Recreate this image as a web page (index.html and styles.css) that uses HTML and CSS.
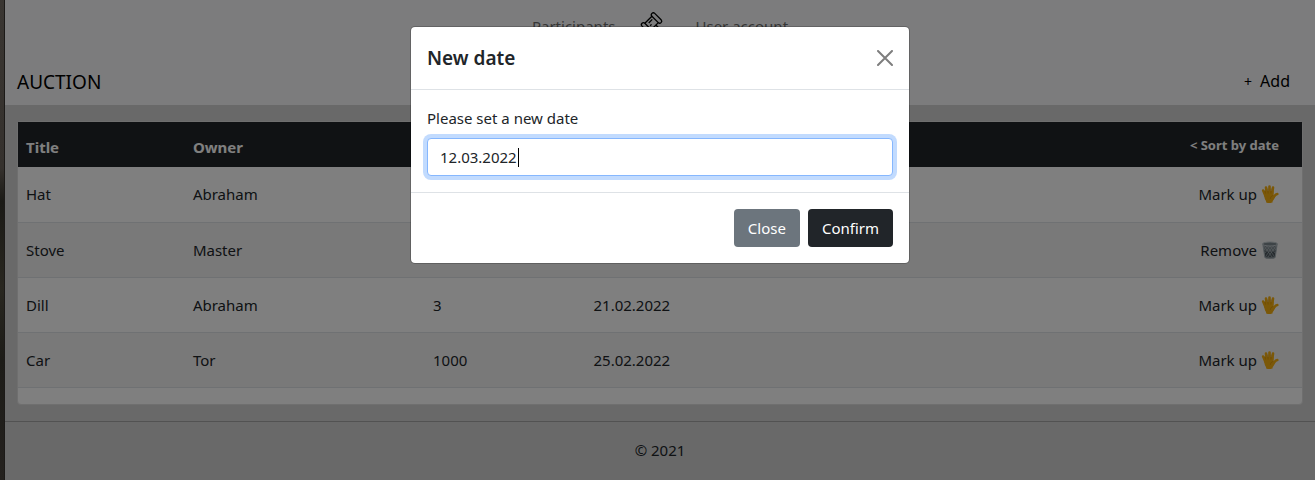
FILE: index.html
```html
<!DOCTYPE html>
<html lang="en">
<head>
<meta charset="utf-8">
<title>Auction</title>
<link rel="stylesheet" href="styles.css">
</head>
<body>
<svg class="sprite" aria-hidden="true">
  <symbol id="hand" viewBox="0 0 18 18">
    <g fill="none" stroke="#f7b010" stroke-width="2.600" stroke-linecap="round">
      <path d="M2.200 5.500 4.500 11M5 2.500 6 10M8.500 1.600V10M12 2.600 11 10"/>
      <path d="M16.300 9c-2.300.2-2.800 2.500-4.300 4"/>
    </g>
    <path fill="#f7b010" d="M3.200 9.500 4 6h8.500v4.500l1.500.5c-.3 2.500-1.500 4-2.300 5l-.2 1.500c-2 .7-4.500.6-6.300-.1l-.2-1.400C3.800 14.500 3.300 12 3.200 9.500z"/>
    <path fill="none" stroke="#d28b00" stroke-width=".6" d="m3.900 5.500.6 3M6.800 3.500l.3 5M10.200 3.500l-.3 5M12.300 10.500c-1.800.2-2.800 1.500-2.900 3.300"/>
  </symbol>
  <symbol id="bin" viewBox="0 0 18 18">
    <path fill="#7b858b" d="m1.800 3 2 13.500c1 1.600 9.400 1.600 10.400 0L16.200 3z"/>
    <path fill="#4e5960" d="m3.300 9.500.9 5.500c2 1.200 7.600 1.200 9.600 0l.9-5.500c-3 1.400-8.400 1.400-11.400 0z"/>
    <path fill="none" stroke="#b9c3c8" stroke-width=".6" d="m3 5 8 11M6 5l7 10M9 5l5 7M12 5l3 4M15 5 7 16M12 5l-7 10M9 5l-5 7M6 5 3 9"/>
    <path fill="none" stroke="#a9b4ba" stroke-width="1" d="m1.800 3 2 13.400c1.200 1.300 9.200 1.300 10.400 0L16.200 3"/>
    <ellipse cx="9" cy="3" rx="7.600" ry="2" fill="#7d888e" stroke="#c3ccd0" stroke-width="1"/>
  </symbol>
</svg>
<div class="desktop">
  <div class="wallpaper"></div>
  <div class="page">
    <header class="header">
      <nav class="nav">
        <a href="#participants">Participants</a>
        <svg class="gavel" viewBox="0 0 24 24" aria-hidden="true">
          <g fill="none" stroke="#000" stroke-width="1.300" transform="translate(12.500 4) rotate(45)">
            <rect x="-6.500" y="-2" width="13" height="4" rx="2"/>
            <path d="M-4.500 2v10M4.500 2v10M-2 4v5M1 8v2"/>
            <rect x="-6.500" y="12" width="13" height="4" rx="2"/>
            <path d="M4.500 5.500h14v3h-14"/>
          </g>
        </svg>
        <a href="#account">User account</a>
      </nav>
      <div class="title-row">
        <h1 class="title">AUCTION</h1>
        <button class="add" type="button"><span class="plus">+</span>Add</button>
      </div>
    </header>
    <main class="content">
      <div class="card">
        <table class="lots">
          <colgroup><col class="col-title"><col class="col-owner"><col class="col-price"><col><col></colgroup>
          <thead>
            <tr><th>Title</th><th>Owner</th><th>Price</th><th>Date</th><th class="action"><button class="sort" type="button">&lt; Sort by date</button></th></tr>
          </thead>
          <tbody>
            <tr><td>Hat</td><td>Abraham</td><td></td><td></td><td class="action"><button class="link" type="button">Mark up<svg class="emoji"><use href="#hand"/></svg></button></td></tr>
            <tr><td>Stove</td><td>Master</td><td></td><td></td><td class="action"><button class="link" type="button">Remove<svg class="emoji"><use href="#bin"/></svg></button></td></tr>
            <tr><td>Dill</td><td>Abraham</td><td>3</td><td>21.02.2022</td><td class="action"><button class="link" type="button">Mark up<svg class="emoji"><use href="#hand"/></svg></button></td></tr>
            <tr><td>Car</td><td>Tor</td><td>1000</td><td>25.02.2022</td><td class="action"><button class="link" type="button">Mark up<svg class="emoji"><use href="#hand"/></svg></button></td></tr>
          </tbody>
        </table>
      </div>
    </main>
    <footer class="footer">© 2021</footer>
    <div class="backdrop">
      <form class="modal" role="dialog" aria-labelledby="modal-title">
        <div class="modal-header">
          <h2 class="modal-title" id="modal-title">New date</h2>
          <button class="close" type="button" aria-label="Close">
            <svg viewBox="0 0 16 16" width="16" height="16"><path d="m1 1 14 14M15 1 1 15" fill="none" stroke="#000" stroke-width="2" stroke-linecap="round"/></svg>
          </button>
        </div>
        <div class="modal-body">
          <label class="label" for="date">Please set a new date</label>
          <div class="field">
            <input class="input" id="date" type="text" value="12.03.2022">
            <span class="caret"></span>
          </div>
        </div>
        <div class="modal-footer">
          <button class="btn btn-secondary" type="button">Close</button>
          <button class="btn btn-dark" type="button">Confirm</button>
        </div>
      </form>
    </div>
  </div>
</div>
</body>
</html>
```

FILE: styles.css
```css
* { box-sizing: border-box; }

body {
  margin: 0;
  font: 15px/24px "Noto Sans", sans-serif;
  color: #212529;
}

h1, h2 { margin: 0; }

button {
  margin: 0;
  padding: 0;
  border: 0;
  background: none;
  color: inherit;
  font: inherit;
  cursor: pointer;
}

.sprite {
  position: absolute;
  width: 0;
  height: 0;
}

.desktop {
  display: grid;
  grid-template-columns: 5px 1fr;
  min-height: 100vh;
}

.wallpaper {
  background: linear-gradient(#3a3632, #35312d 35%, #1b1a16 42%, #292720 60%, #1d1c18 75%, #25221f);
  border-right: 1px solid #1c1a18;
}

.page {
  position: relative;
  display: flex;
  flex-direction: column;
  background: #d3d3d3;
}

.header { background: #f8f9fa; }

.nav {
  display: flex;
  justify-content: center;
  align-items: center;
  gap: 28px;
  padding: 8px 0;
  height: 52px;
}

.nav a {
  color: #6c6c6c;
  text-decoration: none;
}

.gavel {
  width: 24px;
  height: 24px;
  overflow: visible;
}

.title-row {
  display: flex;
  justify-content: space-between;
  align-items: center;
  padding: 12px 25px 6px 12px;
  height: 53px;
  color: #000;
}

.title {
  font-size: 19px;
  font-weight: 400;
}

.add { font-size: 16px; }

.plus {
  margin-right: 8px;
  font-size: 14px;
}

.content { padding: 16px 12px; }

.card {
  padding-bottom: 16px;
  background: #fff;
  border: 1px solid #dedede;
  border-radius: 4px;
}

.lots {
  width: 100%;
  border-collapse: collapse;
  table-layout: fixed;
}

.lots th {
  height: 45px;
  padding: 5px 8px 0;
  background: #212529;
  color: #fff;
  text-align: left;
}

.lots td {
  height: 55px;
  padding: 0 8px;
  border-bottom: 1px solid #dee2e6;
}

.lots tbody tr:nth-child(even) { background: #f2f2f2; }

.col-title { width: 13%; }
.col-owner { width: 18.7%; }
.col-price { width: 12.5%; }

.lots .action {
  padding-right: 23px;
  text-align: right;
}

.lots th.action { padding-top: 0; }

.sort {
  font-size: 13px;
  font-weight: 700;
}

.link {
  display: inline-flex;
  align-items: center;
  gap: 4px;
}

.emoji {
  width: 18px;
  height: 18px;
}

.footer {
  flex: 1;
  padding: 16px;
  border-top: 1px solid #a5a5a5;
  text-align: center;
}

.backdrop {
  position: absolute;
  inset: 0;
  padding: 26px 16px;
  background: rgba(0, 0, 0, 0.5);
}

.modal {
  max-width: 500px;
  margin: 0 auto;
  background: #fff;
  background-clip: padding-box;
  border: 1px solid rgba(0, 0, 0, 0.2);
  border-radius: 5px;
}

.modal-header {
  display: flex;
  justify-content: space-between;
  align-items: center;
  padding: 16px;
  border-bottom: 1px solid #dee2e6;
}

.modal-title {
  font-size: 19px;
  font-weight: 600;
  line-height: 30px;
}

.close {
  display: flex;
  opacity: 0.5;
}

.modal-body { padding: 16px; }

.label {
  display: block;
  margin-bottom: 8px;
}

.field { position: relative; }

.input {
  display: block;
  width: 100%;
  height: 38px;
  padding: 6px 12px;
  border: 1px solid #86b7fe;
  border-radius: 4px;
  outline: 0;
  box-shadow: 0 0 0 4px rgba(13, 110, 253, 0.25);
  color: #212529;
  font: inherit;
}

.caret {
  position: absolute;
  top: 10px;
  left: 91px;
  width: 1px;
  height: 19px;
  background: #000;
}

.modal-footer {
  display: flex;
  justify-content: flex-end;
  gap: 8px;
  padding: 16px;
  border-top: 1px solid #dee2e6;
}

.btn {
  height: 38px;
  padding: 0 14px;
  border-radius: 4px;
  color: #fff;
}

.btn-secondary { background: #6c757d; }
.btn-dark { background: #212529; }
```
